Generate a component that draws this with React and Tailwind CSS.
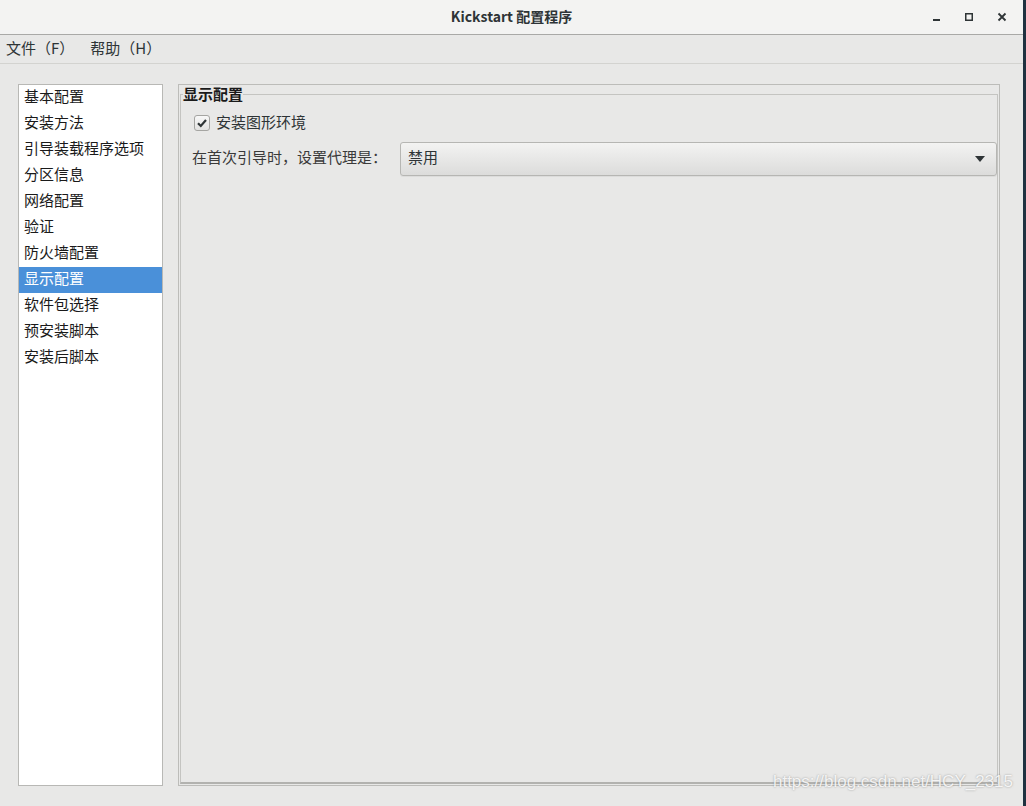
import React from 'react';

const items = [
  '基本配置',
  '安装方法',
  '引导装载程序选项',
  '分区信息',
  '网络配置',
  '验证',
  '防火墙配置',
  '显示配置',
  '软件包选择',
  '预安装脚本',
  '安装后脚本',
];

const font = { fontFamily: '"Noto Sans CJK SC", "Liberation Sans", sans-serif' };

const TitleBar = () => (
  <div className="h-[35px] flex items-center bg-[#f3f3f2] border-b border-[#a9a9a7] relative">
    <div className="flex-1 text-center text-[14px] font-bold text-[#2e3436] leading-none pb-[2px]">
      Kickstart 配置程序
    </div>
    {/* window controls */}
    <div className="absolute right-0 top-0 h-[34px] flex items-center">
      <svg width="10" height="10" viewBox="0 0 10 10" className="mr-[22px]">
        <rect x="1" y="7" width="7" height="2" fill="#2e3436" />
      </svg>
      <svg width="10" height="10" viewBox="0 0 10 10" className="mr-[23px]">
        <rect x="1.75" y="1.75" width="6.5" height="6.5" fill="none" stroke="#2e3436" strokeWidth="1.5" />
      </svg>
      <svg width="10" height="10" viewBox="0 0 10 10" className="mr-[16px]">
        <path d="M1.5 1.5 L8.5 8.5 M8.5 1.5 L1.5 8.5" stroke="#2e3436" strokeWidth="1.8" />
      </svg>
    </div>
  </div>
);

const MenuBar = () => (
  <div className="h-[29px] flex items-center bg-[#e8e8e7] border-b border-[#d3d3d0] text-[15px] text-[#2e3436] pb-[1px]">
    <span className="ml-[6px]">文件（F）</span>
    <span className="ml-[16px]">帮助（H）</span>
  </div>
);

const Sidebar = () => (
  <div className="w-[145px] shrink-0 bg-white border border-[#b8b8b5] overflow-hidden">
    {items.map((item) => {
      const active = item === '显示配置';
      return (
        <div
          key={item}
          className={`h-[26px] flex items-center pl-[5px] pb-[3px] text-[15px] ${
            active ? 'bg-[#4a90d9] text-white' : 'text-[#1a1a1a]'
          }`}
        >
          {item}
        </div>
      );
    })}
  </div>
);

const Dropdown = () => (
  <div className="flex-1 h-[34px] flex items-center justify-between rounded-[3px] border border-[#b6b6b3] bg-gradient-to-b from-[#f3f3f2] to-[#dcdcdb] shadow-[0_1px_0_rgba(0,0,0,0.05)] px-[7px] text-[15px] text-[#2e3436]">
    <span className="pb-[2px]">禁用</span>
    <svg width="10" height="6" viewBox="0 0 10 6" className="mr-[4px]">
      <path d="M0 0 L10 0 L5 6 Z" fill="#2e3436" />
    </svg>
  </div>
);

const DisplayPanel = () => (
  <div className="flex-1 border border-[#bcbcb9] p-[1px] flex">
    <fieldset className="flex-1 border border-[#c4c4c1] border-b-[2px] border-b-[#b2b2af] min-w-0">
      <legend className="ml-[2px] text-[15px] font-bold text-[#1a1a1a] leading-[16px]">显示配置</legend>
      <div className="flex items-center mt-[9px] ml-[13px]">
        <div className="w-[16px] h-[16px] rounded-[3px] border border-[#a5a5a2] bg-gradient-to-b from-[#f8f8f8] to-[#e2e2e1] flex items-center justify-center">
          <svg width="12" height="12" viewBox="0 0 12 12">
            <path d="M2 6.2 L4.8 9 L10 3" fill="none" stroke="#2e3436" strokeWidth="2.2" />
          </svg>
        </div>
        <span className="ml-[6px] text-[15px] text-[#2e3436] pb-[2px]">安装图形环境</span>
      </div>
      <div className="flex items-center mt-[6px] ml-[11px]">
        <span className="w-[208px] shrink-0 text-[15px] text-[#3a3a3a] pb-[2px]">在首次引导时，设置代理是：</span>
        <Dropdown />
      </div>
    </fieldset>
  </div>
);

export default function App() {
  return (
    <div className="w-[1026px] h-[806px] flex bg-[#e8e8e7] overflow-hidden" style={font}>
      <div className="flex-1 flex flex-col relative">
        <TitleBar />
        <MenuBar />
        <div className="flex-1 flex gap-[15px] pt-[20px] pb-[20px] pl-[18px] pr-[23px]">
          <Sidebar />
          <DisplayPanel />
        </div>
        <div
          className="absolute right-[10px] bottom-[12px] text-[17px] text-white/85 [text-shadow:0_0_2px_rgba(90,90,90,0.6)]"
          style={{ fontFamily: '"Liberation Sans", sans-serif' }}
        >
          https://blog.csdn.net/HCY_2315
        </div>
      </div>
      <div className="w-[3px] bg-[#1f3140]" />
    </div>
  );
}
